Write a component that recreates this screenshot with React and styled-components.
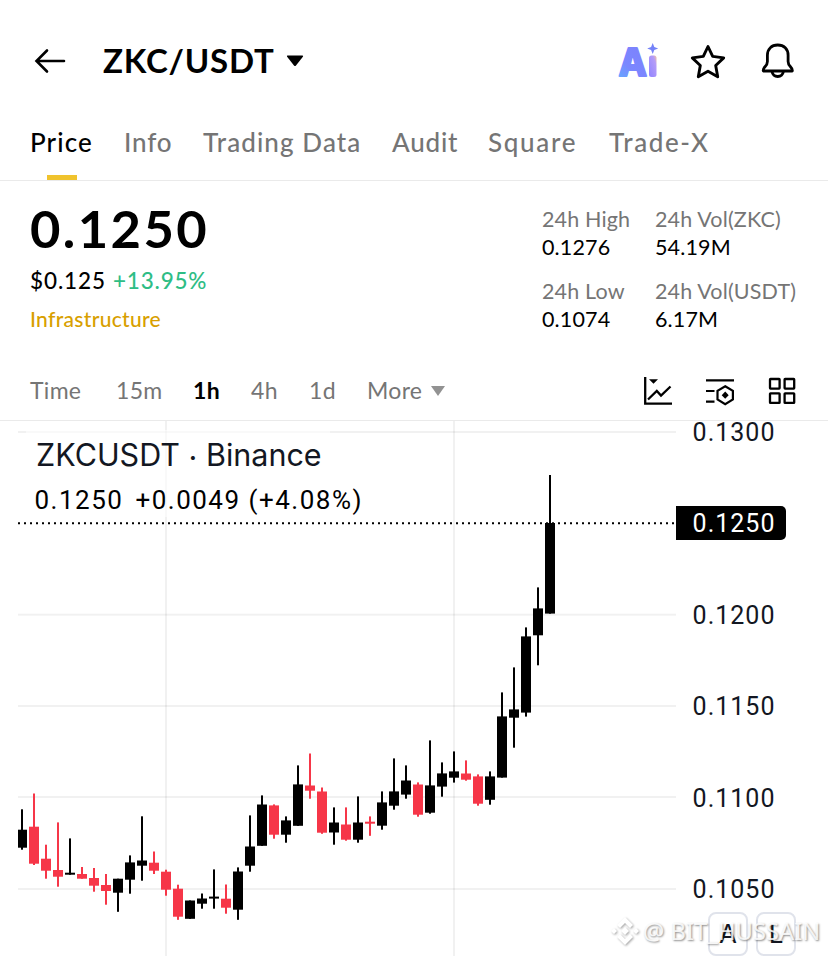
import React from 'react';
import styled, { createGlobalStyle } from 'styled-components';

const GlobalStyle = createGlobalStyle`
  * {
    box-sizing: border-box;
  }

  body {
    margin: 0;
    background: #fff;
    overflow: hidden;
  }
`;

const Page = styled.div`
  position: relative;
  width: 828px;
  height: 956px;
  overflow: hidden;
  background: #fff;
  color: #000;
  font-family: Lato, 'Open Sans', sans-serif;
  white-space: nowrap;
`;

const Header = styled.header`
  display: flex;
  align-items: center;
  height: 122px;
  padding: 0 32px 0 34px;
`;

const Pair = styled.h1`
  margin: 0 0 2px 36px;
  font-size: 33px;
  font-weight: 700;
  line-height: 40px;
  letter-spacing: 0.8px;
`;

const Caret = styled.svg`
  display: block;
  margin-left: ${(props) => props.$gap}px;
`;

const Actions = styled.div`
  display: flex;
  align-items: center;
  gap: 32px;
  margin-left: auto;
`;

const Tabs = styled.nav`
  display: flex;
  height: 59px;
  padding-left: 30px;
  border-bottom: 1px solid #eaeaea;
`;

const Tab = styled.div`
  display: flex;
  flex-direction: column;
  justify-content: space-between;
  width: ${(props) => props.$width}px;
  margin-right: 31px;
  color: ${(props) => (props.$active ? '#000' : '#757575')};
  font-size: 26px;
  font-weight: 500;
  line-height: 41px;
  letter-spacing: ${(props) => props.$spacing}px;

  &::after {
    content: '';
    align-self: center;
    width: 30px;
    height: 5px;
    margin-left: 1px;
    background: ${(props) => (props.$active ? '#f0c32d' : 'transparent')};
  }
`;

const Summary = styled.section`
  display: flex;
  justify-content: space-between;
  height: 181px;
  padding: 18px 30px 0;
`;

const LastPrice = styled.div`
  font-size: 52.5px;
  font-weight: 700;
  line-height: 58px;
  letter-spacing: 2.4px;
`;

const Change = styled.div`
  display: flex;
  gap: 7px;
  margin-top: 10px;
  font-size: 22.5px;
  font-weight: 500;
  line-height: 28px;
  letter-spacing: 0.9px;
`;

const Up = styled.span`
  color: #2ebd85;
  letter-spacing: 0.8px;
`;

const Category = styled.div`
  margin-top: 10px;
  color: #d89f00;
  font-size: 21px;
  font-weight: 500;
  line-height: 28px;
  letter-spacing: 0.3px;
`;

const Stats = styled.dl`
  display: grid;
  grid-template-columns: 113px 143px;
  grid-auto-rows: 72px;
  margin: 6px 0 0;
`;

const Stat = styled.div`
  font-size: 21.5px;
  line-height: 28px;
  letter-spacing: 0.15px;
`;

const StatLabel = styled.dt`
  color: #757575;
`;

const StatValue = styled.dd`
  margin: 0;
`;

const Toolbar = styled.div`
  display: flex;
  align-items: center;
  height: 59px;
  padding: 0 32px 0 30px;
  border-bottom: 1px solid #eaeaea;
`;

const Interval = styled.span`
  width: ${(props) => props.$width}px;
  padding-bottom: 2px;
  color: ${(props) => (props.$active ? '#000' : '#757575')};
  font-size: 23px;
  font-weight: ${(props) => (props.$active ? 700 : 400)};
  line-height: 30px;
  letter-spacing: 0.3px;
`;

const Tools = styled.div`
  display: flex;
  gap: 33px;
  margin-left: auto;
`;

const Chart = styled.section`
  position: relative;
  display: flex;
  height: 535px;
  font-family: Roboto, 'Liberation Sans', sans-serif;
`;

const Legend = styled.div`
  position: absolute;
  top: 9px;
  left: 26px;
  width: 304px;
  padding: 6px 0 0 10px;
  background: rgba(255, 255, 255, 0.6);
`;

const Symbol = styled.div`
  color: #131722;
  font-family: Inter, sans-serif;
  font-feature-settings: 'calt' 0;
  font-size: 30.5px;
  line-height: 38px;
`;

const Dot = styled.span`
  position: relative;
  top: 3px;
`;

const Quote = styled.div`
  display: flex;
  gap: 12px;
  margin: 9px 0 0 -1.5px;
  font-size: 26px;
  line-height: 34px;
  letter-spacing: 1.5px;
`;

const Axis = styled.div`
  width: 152px;
  margin-top: -34.7px;
  overflow: hidden;
`;

const AxisRow = styled.div`
  display: flex;
  align-items: center;
  height: 91.4px;
`;

const AxisLabel = styled.span`
  width: 110px;
  height: 34px;
  padding-left: 16.6px;
  border-radius: 0 5px 5px 0;
  background: ${(props) => (props.$current ? '#000' : 'transparent')};
  color: ${(props) => (props.$current ? '#fff' : '#131722')};
  font-size: 25px;
  line-height: 35px;
  letter-spacing: 1px;
`;

const ScaleButtons = styled.div`
  position: absolute;
  top: 491px;
  left: 708px;
  display: flex;
  gap: 8px;
`;

const ScaleButton = styled.button`
  width: 40px;
  height: 44px;
  padding: 0;
  border: 2px solid #e0e3eb;
  border-radius: 8px;
  background: #fff;
  color: #131722;
  font: 400 26px/40px Inter, sans-serif;
`;

const Watermark = styled.div`
  position: absolute;
  top: 914px;
  left: 610px;
  display: flex;
  align-items: center;
  color: rgba(255, 255, 255, 0.85);
  font-family: 'Noto Sans', sans-serif;
  font-size: 23.8px;
  line-height: 34px;
  text-shadow: 1px 1px 2px rgba(0, 0, 0, 0.45);

  svg {
    margin-right: 3px;
    filter: drop-shadow(1px 1px 1px rgba(0, 0, 0, 0.35));
  }
`;

const tabs = [
  { label: 'Price', width: 63, spacing: 1.1 },
  { label: 'Info', width: 48, spacing: 0.8 },
  { label: 'Trading Data', width: 158, spacing: 1.1 },
  { label: 'Audit', width: 65, spacing: 0.8 },
  { label: 'Square', width: 90, spacing: 1.7 },
  { label: 'Trade-X', width: 100, spacing: 1.6 },
];

const stats = [
  ['24h High', '0.1276'],
  ['24h Vol(ZKC)', '54.19M'],
  ['24h Low', '0.1074'],
  ['24h Vol(USDT)', '6.17M'],
];

const intervals = [
  ['Time', 86],
  ['15m', 77],
  ['1h', 58],
  ['4h', 58],
  ['1d', 58],
  ['More', 54],
];

const axis = ['0.1300', '0.1250', '0.1200', '0.1150', '0.1100', '0.1050'];

// up, high, body top, body bottom, low
const candles = [
  [1, 809.3, 829.7, 847.7, 849.7],
  [0, 793.5, 826.7, 863.7, 865],
  [0, 844.7, 858.7, 870.7, 878.7],
  [0, 822.4, 870, 876.7, 886.7],
  [1, 838.4, 872.7, 874.7, 874.7],
  [0, 867, 874, 878.7, 878.7],
  [0, 868, 878, 885.7, 891.7],
  [0, 874, 885, 891, 904.7],
  [1, 878.7, 878.7, 892.7, 911.8],
  [1, 855.4, 862.4, 879.7, 893.7],
  [1, 816.3, 860.5, 865.7, 880.7],
  [0, 851.5, 862.7, 870.7, 874],
  [0, 869.7, 871.7, 889.7, 895.7],
  [0, 884.7, 888.7, 916.7, 919.8],
  [1, 900.5, 900.5, 918.8, 918.8],
  [1, 893.5, 898.5, 903.7, 908.7],
  [1, 869.4, 896.6, 898.6, 908.7],
  [0, 884.5, 898.7, 907.7, 913.7],
  [1, 867.4, 871.5, 909.7, 919.8],
  [1, 815.4, 846.5, 865.7, 871.7],
  [1, 795.4, 804.5, 845.8, 845.8],
  [0, 804.4, 805.4, 834.7, 838.7],
  [1, 816.4, 820.4, 834.7, 842.7],
  [1, 765.4, 784.4, 825.8, 825.8],
  [0, 753.5, 785.5, 790.7, 798.7],
  [0, 787.5, 791.5, 832.7, 833.8],
  [1, 807.4, 822.5, 832.5, 844.7],
  [0, 807.4, 824.5, 839.7, 840.7],
  [1, 796.4, 822.5, 839.7, 842.7],
  [0, 816.4, 821.7, 823.7, 835.8],
  [1, 791.4, 802.4, 825.7, 829.7],
  [1, 758.4, 791.4, 805.7, 809.7],
  [1, 765.4, 780.5, 794.6, 798.7],
  [0, 782.4, 784.5, 814.7, 816.7],
  [1, 740.4, 785.4, 812.7, 813.7],
  [1, 762.4, 773.4, 786.6, 796.7],
  [1, 751.4, 771.4, 777.7, 782.6],
  [0, 760.4, 773.5, 779.7, 780.7],
  [0, 774.4, 776.4, 803.7, 805.7],
  [1, 771.4, 776.4, 799.8, 804.7],
  [1, 692.4, 716.4, 777.6, 777.6],
  [1, 667.4, 709.4, 717.7, 747.7],
  [1, 627.4, 636.4, 712.6, 716.6],
  [1, 587.4, 608.4, 635.3, 665.3],
  [1, 475, 523, 613.6, 613.6],
];

const BackIcon = () => (
  <svg width="33" height="26" viewBox="34 48 33 26" fill="none" stroke="#000" strokeWidth="2.6" strokeLinecap="round">
    <path d="M64 61H37M47 50.500L36.500 61 47 71.500" />
  </svg>
);

const AiIcon = () => (
  <svg width="41" height="40" viewBox="617 41 41 40" overflow="visible">
    <defs>
      <linearGradient id="ai" x1="0" y1="1" x2="0.6" y2="0">
        <stop offset="0" stopColor="#5db4ff" />
        <stop offset="0.45" stopColor="#7b87ff" />
        <stop offset="1" stopColor="#7d82fc" />
      </linearGradient>
      <linearGradient id="stem" x1="0" y1="1" x2="1" y2="0">
        <stop offset="0" stopColor="#9184ff" />
        <stop offset="0.75" stopColor="#b49cf8" />
        <stop offset="1" stopColor="#f7c39b" />
      </linearGradient>
    </defs>
    <text x="618.500" y="76.300" fontFamily="Inter" fontSize="38" fontWeight="800" fill="url(#ai)" stroke="url(#ai)" strokeWidth="1.800" strokeLinejoin="round" textLength="28.500" lengthAdjust="spacingAndGlyphs">A</text>
    <rect x="649" y="55.500" width="7.500" height="21.500" rx="2.500" fill="url(#stem)" />
    <path d="M652.700 43l1.600 4 3.900 1.500-3.900 1.500-1.600 4-1.600-4-3.900-1.500 3.900-1.500z" fill="#7482f8" />
  </svg>
);

const StarIcon = () => (
  <svg width="36" height="40" viewBox="690 41 36 40" fill="none" stroke="#000" strokeWidth="2.900" strokeLinejoin="round">
    <path d="M708 46.500l4.700 9.900 11 1.500-8 7.600 2 11.200-9.700-5.400-9.700 5.400 2-11.200-8-7.600 11-1.500z" />
  </svg>
);

const BellIcon = () => (
  <svg width="38" height="40" viewBox="758 41 38 40" fill="none" stroke="#000" strokeWidth="2.800" strokeLinejoin="round">
    <path d="M777.700 45c-6.300 0-10.300 4.200-10.300 10.300v6.200c0 2-.8 3.500-2.200 5-1.400 1.500-2.300 3-1.900 4.500h29c.3-1.500-.6-3-2-4.500-1.400-1.500-2.200-3-2.200-5v-6.200c0-6.100-4.100-10.300-10.400-10.300z" />
    <path d="M772 71.500c.6 3.200 2.800 5 5.700 5s5.100-1.800 5.700-5" />
  </svg>
);

const LineIcon = () => (
  <svg width="30" height="30" viewBox="642 376 30 30" fill="none" stroke="#000" strokeWidth="2.300">
    <path d="M645.200 377v26.700H672M648 399.500l8.800-8.500 4.200 4.500 9.500-9" />
    <path d="M649 379.200h9l-4.500 4.600z" fill="#000" stroke="none" />
  </svg>
);

const SettingsIcon = () => (
  <svg width="30" height="30" viewBox="705 376 30 30" fill="none" stroke="#000" strokeWidth="2.200">
    <path d="M706 380.300h28M706 391h8.500M706 401.700h8.500" />
    <path d="M725.200 386.300l7.700 4.500v8.700l-7.700 4.600-7.700-4.600v-8.700z" />
    <path d="M725.200 391.600l3.500 3.600-3.500 3.600-3.500-3.600z" fill="#000" stroke="none" />
  </svg>
);

const GridIcon = () => (
  <svg width="28" height="30" viewBox="768 376 28 30" fill="none" stroke="#000" strokeWidth="2.300">
    {[[770, 379], [784.6, 379], [770, 393.3], [784.6, 393.3]].map(([x, y]) => (
      <rect key={`${x}-${y}`} x={x} y={y} width="9.600" height="9.600" rx="0.500" />
    ))}
  </svg>
);

const DiamondLogo = () => (
  <svg width="30" height="32" viewBox="0 0 30 32" fill="#fff">
    <path d="M15 2l8 8-3 3-5-5-5 5-3-3zM15 30l8-8-3-3-5 5-5-5-3 3zM4 13l3 3-3 3-3-3zM26 13l3 3-3 3-3-3zM15 12l4 4-4 4-4-4z" />
  </svg>
);

const CandleChart = () => (
  <svg width="676" height="535" viewBox="0 421 676 535">
    <g fill="#000" fillOpacity="0.055">
      {[431, 613.7, 705, 796, 888].map((y) => (
        <rect key={y} x="18" y={y} width="658" height="2" />
      ))}
      {[165, 453].map((x) => (
        <rect key={x} x={x} y="421" width="2" height="535" />
      ))}
    </g>
    <path d="M18 523.300H676" stroke="#000" strokeWidth="2" strokeDasharray="2 4" />
    {candles.map(([up, high, top, bottom, low], i) => {
      const x = 22 + i * 12;
      const left = Math.max(18, x - 5);
      return (
        <g key={x} fill={up ? '#000' : '#f63648'}>
          <rect x={x - 1} y={high} width="2" height={low - high} />
          <rect x={left} y={top} width={x + 5 - left} height={bottom - top} />
        </g>
      );
    })}
  </svg>
);

const App = () => {
  return (
    <>
      <GlobalStyle />
      <Page>
        <Header>
          <BackIcon />
          <Pair>ZKC/USDT</Pair>
          <Caret $gap={11} width="18" height="12" viewBox="0 0 18 12">
            <path d="M1.500.5h15q1 .2.400 1.200L10 10.500q-1 1-2 0L1.100 1.700Q.6.600 1.500.5z" />
          </Caret>
          <Actions>
            <AiIcon />
            <StarIcon />
            <BellIcon />
          </Actions>
        </Header>
        <Tabs>
          {tabs.map((tab, i) => (
            <Tab key={tab.label} $active={i === 0} $width={tab.width} $spacing={tab.spacing}>
              {tab.label}
            </Tab>
          ))}
        </Tabs>
        <Summary>
          <div>
            <LastPrice>0.1250</LastPrice>
            <Change>
              <span>$0.125</span>
              <Up>+13.95%</Up>
            </Change>
            <Category>Infrastructure</Category>
          </div>
          <Stats>
            {stats.map(([label, value]) => (
              <Stat key={label}>
                <StatLabel>{label}</StatLabel>
                <StatValue>{value}</StatValue>
              </Stat>
            ))}
          </Stats>
        </Summary>
        <Toolbar>
          {intervals.map(([label, width]) => (
            <Interval key={label} $active={label === '1h'} $width={width}>
              {label}
            </Interval>
          ))}
          <Caret $gap={10} width="14" height="10" viewBox="0 0 14 10">
            <path d="M0 0h14L7 10z" fill="#929292" />
          </Caret>
          <Tools>
            <LineIcon />
            <SettingsIcon />
            <GridIcon />
          </Tools>
        </Toolbar>
        <Chart>
          <CandleChart />
          <Axis>
            {axis.map((price) => (
              <AxisRow key={price}>
                <AxisLabel $current={price === '0.1250'}>{price}</AxisLabel>
              </AxisRow>
            ))}
          </Axis>
          <Legend>
            <Symbol>
              ZKCUSDT <Dot>·</Dot> Binance
            </Symbol>
            <Quote>
              <span>0.1250</span>
              <span>+0.0049 (+4.08%)</span>
            </Quote>
          </Legend>
          <ScaleButtons>
            <ScaleButton>A</ScaleButton>
            <ScaleButton>L</ScaleButton>
          </ScaleButtons>
        </Chart>
        <Watermark>
          <DiamondLogo />
          @ BIT_HUSSAIN
        </Watermark>
      </Page>
    </>
  );
};

export default App;
